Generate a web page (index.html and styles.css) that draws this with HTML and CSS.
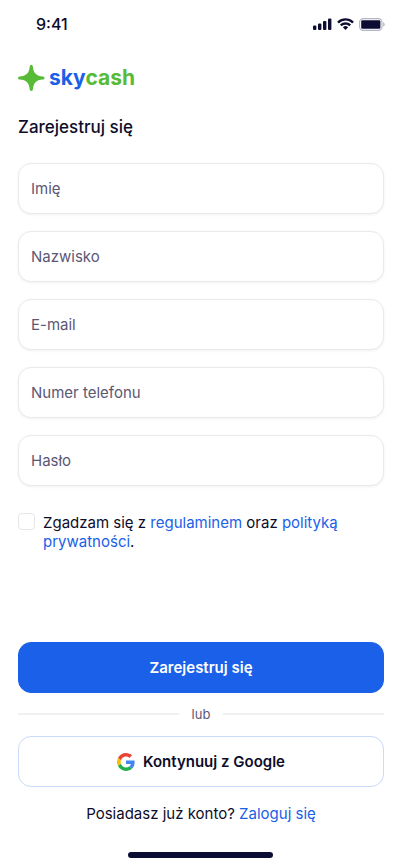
FILE: index.html
```html
<!DOCTYPE html>
<html lang="pl">
<head>
<meta charset="utf-8">
<meta name="viewport" content="width=device-width, initial-scale=1">
<title>SkyCash – Zarejestruj się</title>
<link rel="stylesheet" href="styles.css">
</head>
<body>
<div class="screen">
  <header class="status">
    <span class="status-time">9:41</span>
    <div class="status-icons">
      <svg width="19" height="12" viewBox="0 0 19 12" fill="#0d0d33" aria-hidden="true">
        <rect x="0" y="7.6" width="3.4" height="4.4" rx="1.1"/>
        <rect x="5" y="5.4" width="3.4" height="6.6" rx="1.1"/>
        <rect x="10" y="2.9" width="3.4" height="9.1" rx="1.1"/>
        <rect x="15" y="0.4" width="3.4" height="11.6" rx="1.1"/>
      </svg>
      <svg width="17" height="12" viewBox="0 0 17 12" fill="#0d0d33" aria-hidden="true">
        <path d="M8.5 2.6c2.4 0 4.7.9 6.4 2.6.1.1.3.1.5 0l1.2-1.3c.2-.1.2-.4 0-.5a11.8 11.8 0 0 0-16.2 0c-.2.1-.2.4 0 .5l1.2 1.3c.2.1.4.1.5 0a9.3 9.3 0 0 1 6.4-2.6z"/>
        <path d="M8.5 6.7c1.3 0 2.6.5 3.6 1.4.1.1.3.1.5 0l1.2-1.3c.2-.1.2-.4 0-.5a7.8 7.8 0 0 0-10.6 0c-.2.1-.2.4 0 .5l1.2 1.3c.2.1.4.1.5 0a5.3 5.3 0 0 1 3.6-1.4z"/>
        <path d="M10.9 9.5c.1-.1.1-.4 0-.5a3.7 3.7 0 0 0-4.8 0c-.1.1-.1.4 0 .5l2.1 2.2c.2.2.4.2.6 0z"/>
      </svg>
      <svg width="26" height="13" viewBox="0 0 26 13" aria-hidden="true">
        <rect x="0.6" y="0.6" width="22.4" height="11.8" rx="3.6" fill="none" stroke="#b4b4c4" stroke-width="1.1"/>
        <rect x="2.2" y="2.2" width="19.2" height="8.6" rx="1.2" fill="#0d0d33"/>
        <path d="M24.2 4.3v4.4c.9-.4 1.5-1.2 1.5-2.2s-.6-1.8-1.5-2.2z" fill="#b4b4c4"/>
      </svg>
    </div>
  </header>

  <main class="content">
    <div class="logo">
      <svg width="27" height="26" viewBox="0 0 27 26" aria-hidden="true">
        <path d="M13.3 0c1 0 1.5.7 1.6 1.7.5 6.200 3.400 9.300 10 9.700 1 .1 1.700.7 1.700 1.600s-.7 1.500-1.700 1.600c-6.600.4-9.500 3.500-10 9.700-.1 1-.6 1.700-1.600 1.700s-1.500-.7-1.600-1.700c-.5-6.200-3.400-9.300-10-9.700C.7 14.500 0 13.900 0 13s.7-1.500 1.700-1.600c6.600-.4 9.500-3.500 10-9.700.1-1 .6-1.700 1.600-1.700z" fill="#57bb36"/>
      </svg>
      <span class="logo-name"><span class="logo-sky">sky</span><span class="logo-cash">cash</span></span>
    </div>
    <h1 class="title">Zarejestruj się</h1>

    <form class="form">
      <input class="field" type="text" placeholder="Imię" aria-label="Imię">
      <input class="field" type="text" placeholder="Nazwisko" aria-label="Nazwisko">
      <input class="field" type="email" placeholder="E-mail" aria-label="E-mail">
      <input class="field" type="tel" placeholder="Numer telefonu" aria-label="Numer telefonu">
      <input class="field" type="password" placeholder="Hasło" aria-label="Hasło">

      <div class="consent">
        <input class="checkbox" type="checkbox" id="consent">
        <label class="consent-text" for="consent">Zgadzam się z <a href="#">regulaminem</a> oraz <a href="#">polityką prywatności</a>.</label>
      </div>

      <div class="actions">
        <button class="button button-primary" type="submit">Zarejestruj się</button>
        <div class="divider">lub</div>
        <button class="button button-google" type="button">
          <svg width="18" height="18" viewBox="0 0 48 48" aria-hidden="true">
            <path fill="#ea4335" d="M24 9.500c3.540 0 6.710 1.220 9.210 3.600l6.850-6.850C35.900 2.380 30.470 0 24 0 14.620 0 6.510 5.380 2.560 13.220l7.980 6.190C12.430 13.720 17.740 9.500 24 9.500z"/>
            <path fill="#4285f4" d="M46.980 24.550c0-1.570-.15-3.090-.38-4.550H24v9.020h12.940c-.58 2.960-2.260 5.480-4.780 7.180l7.730 6c4.510-4.180 7.090-10.360 7.090-17.650z"/>
            <path fill="#fbbc05" d="M10.530 28.590c-.48-1.450-.76-2.990-.76-4.590s.27-3.140.76-4.590l-7.980-6.190C.92 16.460 0 20.120 0 24c0 3.880.92 7.540 2.560 10.780z"/>
            <path fill="#20b04c" d="M24 48c6.480 0 11.930-2.130 15.890-5.810l-7.730-6c-2.150 1.450-4.920 2.300-8.160 2.300-6.260 0-11.570-4.220-13.470-9.910l-7.980 6.190C6.510 42.620 14.620 48 24 48z"/>
          </svg>
          Kontynuuj z Google
        </button>
        <p class="login">Posiadasz już konto? <a href="#">Zaloguj się</a></p>
      </div>
    </form>
  </main>
  <div class="home-indicator"></div>
</div>
</body>
</html>
```
FILE: styles.css
```css
* {
  box-sizing: border-box;
}

body {
  margin: 0;
  background: #fff;
  color: #0d0d2b;
  font: 400 15px/20px Inter, sans-serif;
}

a {
  color: #1b60e8;
  text-decoration: none;
}

.screen {
  display: flex;
  flex-direction: column;
  min-height: 100vh;
  padding-bottom: 8px;
}

.status {
  display: flex;
  align-items: center;
  justify-content: space-between;
  height: 48px;
  padding: 0 16px 0 36px;
}

.status-time {
  font-size: 16px;
  font-weight: 500;
}

.status-icons {
  display: flex;
  align-items: center;
  gap: 5px;
}

.content {
  display: flex;
  flex: 1;
  flex-direction: column;
  padding: 16px 17px 0 18px;
}

.logo {
  display: flex;
  align-items: center;
  gap: 4px;
  height: 28px;
}

.logo-name {
  font: 700 21px/26px Inter, sans-serif;
}

.logo-sky {
  color: #1b60e8;
}

.logo-cash {
  color: #57bb36;
}

.title {
  margin: 23px 0 24px;
  font-size: 17px;
  font-weight: 500;
  line-height: 24px;
}

.form {
  display: flex;
  flex: 1;
  flex-direction: column;
  gap: 17px;
}

.field {
  width: 100%;
  height: 51px;
  padding: 0 12px;
  border: 1px solid #e9e9ee;
  border-radius: 13px;
  background: #fff;
  box-shadow: 0 1px 3px rgba(13, 13, 51, 0.06);
  color: inherit;
  font: inherit;
}

.field::placeholder {
  color: #5b5775;
  opacity: 1;
}

.consent {
  display: flex;
  gap: 8px;
  padding-top: 10px;
}

.checkbox {
  flex: none;
  width: 17px;
  height: 17px;
  margin: 0;
  appearance: none;
  border: 1px solid #e6e6ea;
  border-radius: 4px;
}

.checkbox:checked {
  background: #1b60e8;
}

.consent-text {
  line-height: 19px;
}

.actions {
  display: flex;
  flex-direction: column;
  margin-top: auto;
}

.button {
  display: flex;
  align-items: center;
  justify-content: center;
  gap: 8px;
  width: 100%;
  height: 51px;
  padding: 0;
  border: 1px solid;
  border-radius: 13px;
  font: 600 15px/20px Inter, sans-serif;
}

.button-primary {
  border-color: #1b60e8;
  background: #1b60e8;
  color: #fff;
}

.button-google {
  border-color: #c9dafa;
  background: #fff;
  color: #0d0d2b;
}

.divider {
  display: flex;
  align-items: center;
  gap: 13px;
  height: 41px;
  margin-bottom: 2px;
  color: #5b5775;
  font-size: 13px;
}

.divider::before,
.divider::after {
  flex: 1;
  height: 2px;
  background: #f0f0f2;
  content: "";
}

.login {
  margin: 17px 0 28px;
  text-align: center;
}

.home-indicator {
  align-self: center;
  width: 36%;
  height: 6px;
  border-radius: 3px;
  background: #0d0d33;
}
```
